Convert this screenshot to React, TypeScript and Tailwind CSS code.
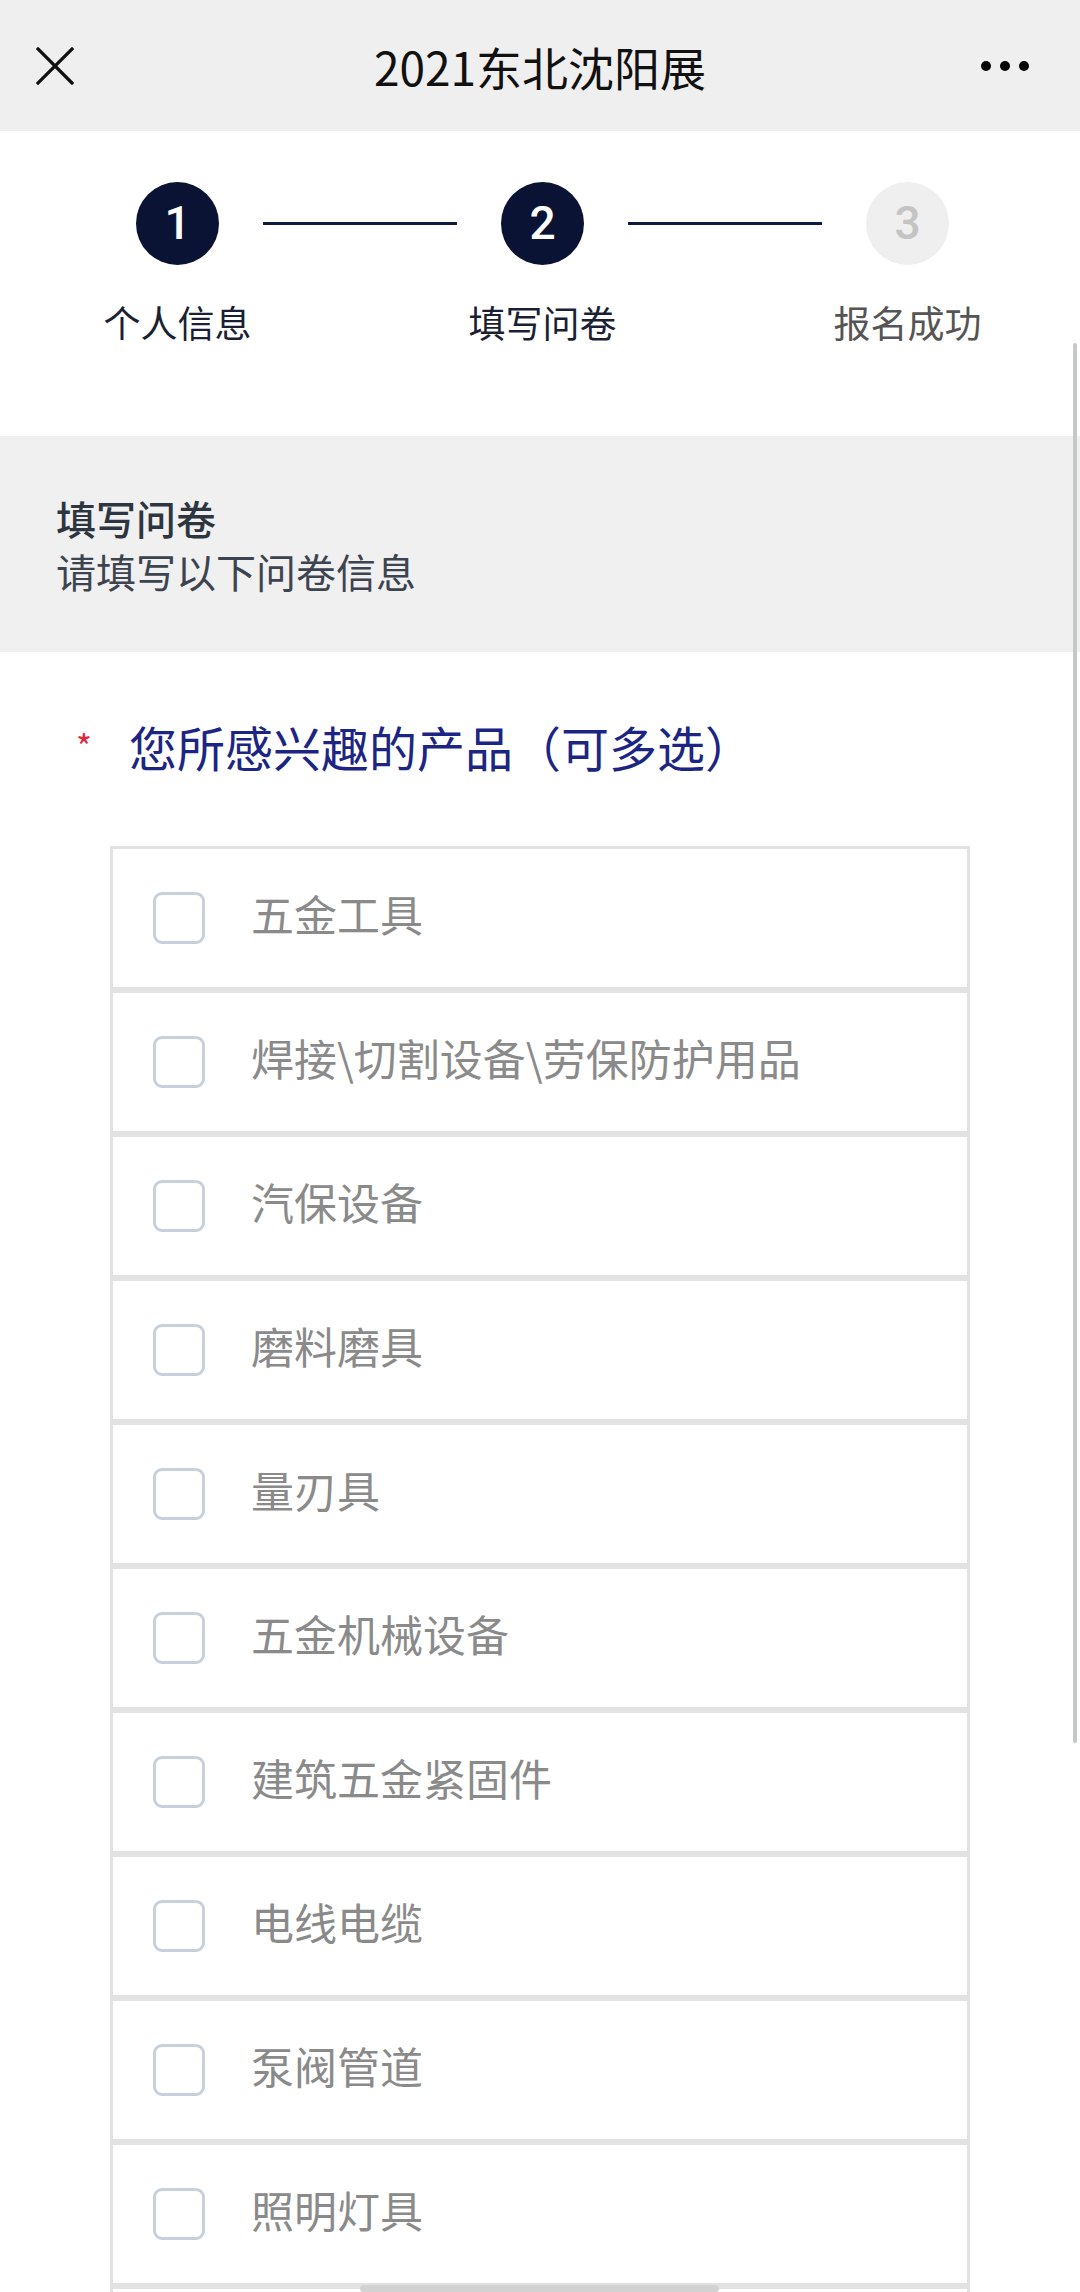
const products = [
  "五金工具",
  "焊接\\切割设备\\劳保防护用品",
  "汽保设备",
  "磨料磨具",
  "量刃具",
  "五金机械设备",
  "建筑五金紧固件",
  "电线电缆",
  "泵阀管道",
  "照明灯具",
  "",
];

const steps = [
  { n: "1", label: "个人信息", done: true },
  { n: "2", label: "填写问卷", done: true },
  { n: "3", label: "报名成功", done: false },
];

const App = () => {
  return (
    <div
      className="relative h-[2292px] w-[1080px] overflow-hidden bg-white"
      style={{ fontFamily: '"Noto Sans CJK SC", "Noto Sans", sans-serif' }}
    >
      {/* top bar */}
      <header className="grid h-[131px] grid-cols-[1fr_auto_1fr] items-center bg-[#efefef]">
        <div className="pl-[36px]">
          <svg width="38" height="38" viewBox="0 0 38 38" fill="none" stroke="#111" strokeWidth="3.2" strokeLinecap="square">
            <path d="M2 2L36 36M36 2L2 36" />
          </svg>
        </div>
        <h1 className="text-[46px] leading-none text-[#111]">2021东北沈阳展</h1>
        <div className="flex justify-end gap-[9px] pr-[51px]">
          <span className="h-[10px] w-[10px] rounded-full bg-black" />
          <span className="h-[10px] w-[10px] rounded-full bg-black" />
          <span className="h-[10px] w-[10px] rounded-full bg-black" />
        </div>
      </header>

      {/* steps */}
      <section className="flex h-[305px] items-start pl-[136px] pt-[51px]">
        {steps.map((s, i) => (
          <div key={s.n} className="flex items-start">
            <div className="flex w-[83px] flex-col items-center">
              <div
                className={
                  s.done
                    ? "flex h-[83px] w-[83px] items-center justify-center rounded-full bg-[#0a1333] text-[46px] font-medium text-white"
                    : "flex h-[83px] w-[83px] items-center justify-center rounded-full bg-[#efefef] text-[46px] font-medium text-[#c4c4c4]"
                }
                style={{ fontFamily: "Roboto, sans-serif" }}
              >
                {s.n}
              </div>
              <div
                className={
                  i === 2
                    ? "mt-[32px] whitespace-nowrap text-[37px] leading-[50px] text-[#555]"
                    : "mt-[32px] whitespace-nowrap text-[37px] leading-[50px] text-[#1a1f33]"
                }
              >
                {s.label}
              </div>
            </div>
            {i < 2 && <div className="mx-[44px] mt-[40px] h-[3px] w-[194px] bg-[#101a3d]" />}
          </div>
        ))}
      </section>

      {/* section header */}
      <section className="h-[216px] bg-[#f0f0f0] px-[56px] pt-[56px]">
        <div className="text-[40px] font-medium leading-[53px] text-[#2d3540]">填写问卷</div>
        <div className="text-[40px] leading-[53px] text-[#3d4450]">请填写以下问卷信息</div>
      </section>

      {/* question */}
      <div className="flex items-center pl-[76px] pt-[62px]">
        <span className="mr-[37px] text-[34px] leading-[64px] text-[#e0253a]">*</span>
        <span className="text-[48px] leading-[64px] text-[#1c2583]">您所感兴趣的产品（可多选）</span>
      </div>

      <div className="ml-[110px] mt-[68px] w-[860px]">
        {products.map((p, i) => (
          <label key={i} className="flex h-[144px] items-center border-[3px] border-[#e2e2e2] pl-[40px]">
            <span className="h-[52px] w-[52px] shrink-0 rounded-[9px] border-[3px] border-[#c7d1dc]" />
            <span className="mb-[10px] ml-[46px] whitespace-nowrap text-[43px] text-[#8a8a8a]">{p}</span>
          </label>
        ))}
      </div>

      {/* scrollbars */}
      <div className="absolute right-[3px] top-[343px] h-[1400px] w-[4px] rounded-full bg-[#c4c8c8]" />
      <div className="absolute bottom-0 left-[360px] h-[7px] w-[359px] rounded-full bg-[#d2d2d2]" />
    </div>
  );
};

export default App;
